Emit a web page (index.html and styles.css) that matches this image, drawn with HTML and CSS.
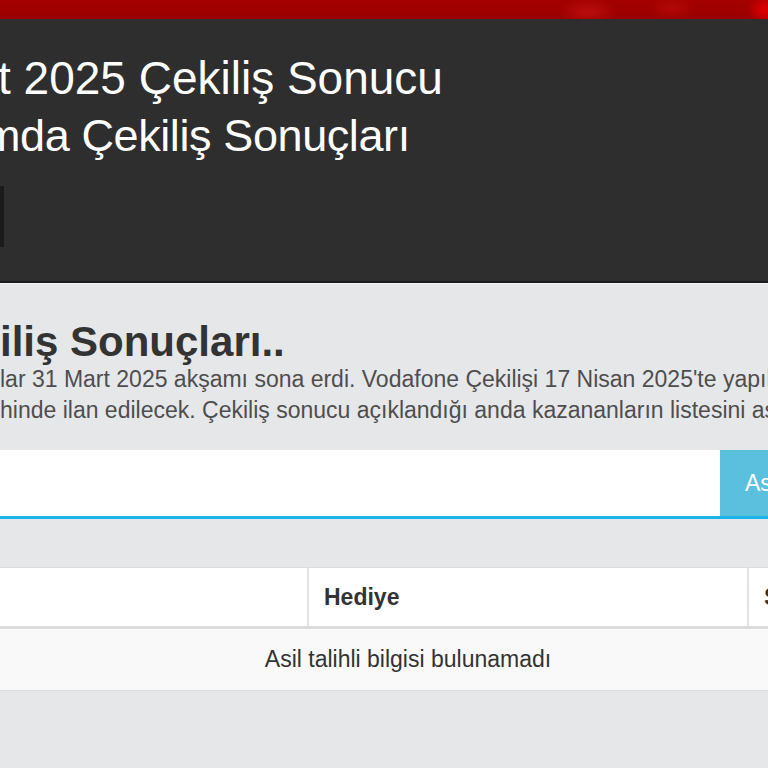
FILE: index.html
```html
<!DOCTYPE html>
<html lang="tr">
<head>
  <meta charset="UTF-8">
  <title>Vodafone Çekiliş Sonuçları</title>
  <link rel="stylesheet" href="styles.css">
</head>
<body>
  <div class="topbar"></div>

  <!-- başlık alanı -->
  <div class="hero">
    <h1 class="hero-title">t 2025 Çekiliş Sonucu</h1>
    <h2 class="hero-sub">mda Çekiliş Sonuçları</h2>
    <span class="hero-btn"></span>
  </div>

  <div class="content">
    <h2 class="section-title">iliş Sonuçları..</h2>
    <p class="lead">lar 31 Mart 2025 akşamı sona erdi. Vodafone Çekilişi 17 Nisan 2025'te yapılacak<br>hinde ilan edilecek. Çekiliş sonucu açıklandığı anda kazananların listesini aşağıda</p>

    <div class="search">
      <input type="text" class="search-input">
      <button class="search-btn">Asil Talihli Ara</button>
    </div>

    <table class="results">
      <colgroup>
        <col class="col-name">
        <col class="col-gift">
        <col class="col-rest">
      </colgroup>
      <thead>
        <tr>
          <th></th>
          <th>Hediye</th>
          <th>Sıra</th>
        </tr>
      </thead>
      <tbody>
        <tr>
          <td colspan="3" class="empty">Asil talihli bilgisi bulunamadı</td>
        </tr>
      </tbody>
    </table>
  </div>
</body>
</html>
```

FILE: styles.css
```css
html, body {
  overflow: hidden;
}

body {
  margin: 0;
  background: #e6e7e9;
  font-family: "Liberation Sans", Arial, sans-serif;
  color: #333;
}

.topbar {
  height: 19px;
  background:
    radial-gradient(ellipse 30px 14px at 588px 12px, rgba(220, 30, 30, 0.45), transparent),
    radial-gradient(ellipse 24px 12px at 672px 8px, rgba(210, 20, 20, 0.4), transparent),
    radial-gradient(ellipse 18px 16px at 765px 10px, rgba(240, 0, 0, 0.85), transparent),
    linear-gradient(#a50000, #9a0000);
}

.hero {
  background: #2e2e2e;
  padding: 30px 0 34px;
  border-bottom: 2px solid #1c1c1c;
}

.hero-title,
.hero-sub {
  margin: 0;
  color: #fff;
  font-weight: normal;
  font-size: 45px;
  line-height: 58px;
  white-space: nowrap;
}

.hero-title {
  font-size: 46px;
  margin-left: -2px;
}

.hero-sub {
  margin-left: -17px;
  letter-spacing: -0.4px;
}

.hero-btn {
  display: block;
  width: 4px;
  height: 61px;
  margin-top: 21px;
  background: #1b1b1b;
}

.content {
  border-top: 1px solid #f3f3f3;
  padding-top: 36px;
}

.section-title {
  margin: 0;
  font-size: 42px;
  line-height: 44px;
  font-weight: bold;
  color: #333;
  white-space: nowrap;
}

.lead {
  margin: 0;
  font-size: 23px;
  line-height: 31px;
  color: #4e4e4e;
  white-space: nowrap;
}

.search {
  display: flex;
  margin: 24px -120px 0 0;
  border-bottom: 3px solid #1ab4ec;
}

.search-input {
  flex: 1;
  height: 66px;
  border: none;
  padding: 0 12px;
  background: #fff;
  font: inherit;
  outline: none;
}

.search-btn {
  width: 168px;
  border: none;
  background: #5bc0de;
  color: #fff;
  font-family: inherit;
  font-size: 23px;
  text-align: left;
  padding: 0 0 0 25px;
  white-space: nowrap;
}

.results {
  margin: 48px 0 0 -100px;
  width: 1016px;
  table-layout: fixed;
  border-collapse: collapse;
  font-size: 23px;
}

.col-name {
  width: 408px;
}

.col-gift {
  width: 440px;
}

.results th {
  background: #fff;
  text-align: left;
  padding: 15px 15px;
  line-height: 28px;
  border-top: 1px solid #dcdcdc;
  border-left: 2px solid #e2e2e2;
  border-bottom: 3px solid #dcdcdc;
  color: #333;
}

.results th:first-child {
  border-left: none;
}

.results td {
  padding: 16px 15px;
  line-height: 29px;
  background: #f9f9f9;
  border-bottom: 1px solid #dcdcdc;
  color: #333;
}

.empty {
  text-align: center;
}
```
